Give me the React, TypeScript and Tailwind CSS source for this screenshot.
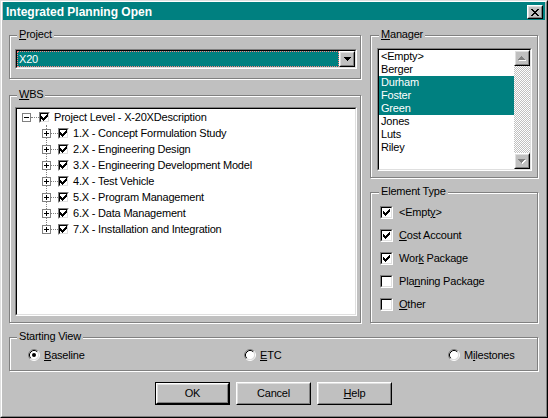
import React from "react";

const wbsItems = [
  "1.X - Concept Formulation Study",
  "2.X - Engineering Design",
  "3.X - Engineering Development Model",
  "4.X - Test Vehicle",
  "5.X - Program Management",
  "6.X - Data Management",
  "7.X - Installation and Integration",
];

const managers = [
  { name: "<Empty>", selected: false },
  { name: "Berger", selected: false },
  { name: "Durham", selected: true },
  { name: "Foster", selected: true },
  { name: "Green", selected: true },
  { name: "Jones", selected: false },
  { name: "Luts", selected: false },
  { name: "Riley", selected: false },
];

function Sunken({ className = "", children }: { className?: string; children?: React.ReactNode }) {
  return (
    <div className={`border border-t-[#808080] border-l-[#808080] border-b-white border-r-white ${className}`}>
      <div className="w-full h-full border border-t-black border-l-black border-b-[#dfdfdf] border-r-[#dfdfdf] bg-white">
        {children}
      </div>
    </div>
  );
}

function Raised({ className = "", children }: { className?: string; children?: React.ReactNode }) {
  return (
    <div className={`border border-t-white border-l-white border-b-black border-r-black shrink-0 ${className}`}>
      <div className="w-full h-full border border-t-[#dfdfdf] border-l-[#dfdfdf] border-b-[#808080] border-r-[#808080] bg-[#c0c0c0] flex items-center justify-center">
        {children}
      </div>
    </div>
  );
}

function Group({
  label,
  labelPos = "left-[7px]",
  className = "",
  children,
}: {
  label: React.ReactNode;
  labelPos?: string;
  className?: string;
  children?: React.ReactNode;
}) {
  return (
    <div className={`relative border border-[#808080] shadow-[1px_1px_0_#fff,inset_1px_1px_0_#fff] ${className}`}>
      <span className={`absolute top-[-8px] ${labelPos} px-[2px] bg-[#c0c0c0] leading-[13px] whitespace-nowrap`}>{label}</span>
      {children}
    </div>
  );
}

function CheckMark() {
  return (
    <svg width="7" height="7" viewBox="0 0 7 7" shapeRendering="crispEdges" className="block">
      <path
        d="M6 0h1v1H6zM5 1h2v1H5zM0 2h1v1H0zM4 2h3v1H4zM0 3h2v1H0zM3 3h3v1H3zM0 4h5v1H0zM1 5h3v1H1zM2 6h1v1H2z"
        fill="#000"
      />
    </svg>
  );
}

function CheckBox({ checked, small = false }: { checked: boolean; small?: boolean }) {
  return (
    <div
      className={`${small ? "w-[11px] h-[11px]" : "w-[13px] h-[13px]"} shrink-0 border border-t-[#808080] border-l-[#808080] border-b-white border-r-white`}
    >
      <div className="w-full h-full border border-t-black border-l-black border-b-[#dfdfdf] border-r-[#dfdfdf] bg-white flex items-center justify-center">
        {checked && <CheckMark />}
      </div>
    </div>
  );
}

function Radio({ checked }: { checked: boolean }) {
  return (
    <svg width="12" height="12" viewBox="0 0 12 12" className="shrink-0 block">
      <circle cx="6" cy="6" r="4.5" fill="#fff" />
      <path d="M2.11 9.89 A5.5 5.5 0 0 1 9.89 2.11" fill="none" stroke="#808080" strokeWidth="1" />
      <path d="M9.89 2.11 A5.5 5.5 0 0 1 2.11 9.89" fill="none" stroke="#fff" strokeWidth="1" />
      <path d="M2.82 9.18 A4.5 4.5 0 0 1 9.18 2.82" fill="none" stroke="#000" strokeWidth="1" />
      <path d="M9.18 2.82 A4.5 4.5 0 0 1 2.82 9.18" fill="none" stroke="#dfdfdf" strokeWidth="1" />
      {checked && <circle cx="6" cy="6" r="2" fill="#000" />}
    </svg>
  );
}

function Expander({ open }: { open: boolean }) {
  return (
    <div className="w-[9px] h-[9px] border border-[#808080] bg-white relative z-10 shrink-0">
      <svg width="7" height="7" viewBox="0 0 7 7" shapeRendering="crispEdges" className="block">
        <rect x="1" y="3" width="5" height="1" fill="#000" />
        {!open && <rect x="3" y="1" width="1" height="5" fill="#000" />}
      </svg>
    </div>
  );
}

function ArrowDown({ color = "#000" }: { color?: string }) {
  return (
    <svg width="7" height="4" viewBox="0 0 7 4" shapeRendering="crispEdges" className="block">
      <path d="M0 0h7v1H0zM1 1h5v1H1zM2 2h3v1H2zM3 3h1v1H3z" fill={color} />
    </svg>
  );
}

function DisabledArrow({ up }: { up: boolean }) {
  const d = up ? "M3 0h1v1H3zM2 1h3v1H2zM1 2h5v1H1zM0 3h7v1H0z" : "M0 0h7v1H0zM1 1h5v1H1zM2 2h3v1H2zM3 3h1v1H3z";
  return (
    <svg width="8" height="5" viewBox="0 0 8 5" shapeRendering="crispEdges" className="block">
      <path d={d} fill="#fff" transform="translate(1 1)" />
      <path d={d} fill="#808080" />
    </svg>
  );
}

export default function App() {
  return (
    <div className="w-[548px] h-[418px] bg-[#c0c0c0] border border-t-[#dfdfdf] border-l-[#dfdfdf] border-b-black border-r-black font-['Liberation_Sans',Arial,sans-serif] text-[11px] tracking-[-0.2px] text-black select-none">
      <div className="h-full border border-t-white border-l-white border-b-[#808080] border-r-[#808080] px-[1px] pb-[1px] flex flex-col">
        {/* title bar */}
        <div className="h-[18px] shrink-0 bg-[#008080] flex justify-between pl-[3px] pr-[2px]">
          <span className="pt-[3px] leading-[14px] text-[12px] font-bold tracking-normal text-white">Integrated Planning Open</span>
          <Raised className="w-[16px] h-[14px] mt-[3px]">
            <svg width="8" height="7" viewBox="0 0 8 7" shapeRendering="crispEdges" className="block">
              <path
                d="M0 0h2v1H0zM6 0h2v1H6zM1 1h2v1H1zM5 1h2v1H5zM2 2h4v1H2zM3 3h2v1H3zM2 4h4v1H2zM1 5h2v1H1zM5 5h2v1H5zM0 6h2v1H0zM6 6h2v1H6z"
                fill="#000"
              />
            </svg>
          </Raised>
        </div>

        <div className="flex flex-col pl-[6px] pr-[7px] pt-[15px]">
          <div className="flex gap-[9px]">
            {/* left column */}
            <div className="w-[352px] flex flex-col">
              <Group label={<><u>P</u>roject</>} className="h-[44px]">
                <Sunken className="ml-[5px] mt-[13px] w-[342px] h-[20px]">
                  <div className="flex h-full">
                    <div className="flex-1 bg-[#008080] border border-dotted border-[#ff7f7f] text-white pl-[1px] leading-[14px]">X20</div>
                    <Raised className="w-[16px] h-[16px]">
                      <ArrowDown />
                    </Raised>
                  </div>
                </Sunken>
              </Group>

              <Group label={<><u>W</u>BS</>} className="mt-[16px] h-[228px]">
                <Sunken className="ml-[5px] mt-[11px] w-[342px] h-[209px]">
                  <div className="flex items-center h-[16px] pl-[5px]">
                    <Expander open />
                    <div className="w-[8px] border-t border-dotted border-[#808080]" />
                    <CheckBox checked small />
                    <span className="ml-[4px] leading-[16px] whitespace-nowrap">Project Level - X-20XDescription</span>
                  </div>
                  <div className="relative">
                    <div className="absolute left-[29px] top-0 bottom-[8px] border-l border-dotted border-[#808080]" />
                    {wbsItems.map((item) => (
                      <div key={item} className="flex items-center h-[16px] pl-[25px]">
                        <Expander open={false} />
                        <div className="w-[7px] border-t border-dotted border-[#808080]" />
                        <CheckBox checked small />
                        <span className="ml-[4px] leading-[16px] whitespace-nowrap">{item}</span>
                      </div>
                    ))}
                  </div>
                </Sunken>
              </Group>
            </div>

            {/* right column */}
            <div className="w-[168px] flex flex-col">
              <Group label={<><u>M</u>anager</>} labelPos="left-[8px]" className="h-[143px]">
                <Sunken className="ml-[6px] mt-[12px] w-[155px] h-[123px]">
                  <div className="flex h-full">
                    <div className="flex-1">
                      {managers.map((m) => (
                        <div
                          key={m.name}
                          className={`h-[13px] leading-[13px] pl-[2px] ${m.selected ? "bg-[#008080] text-white" : ""}`}
                        >
                          {m.name}
                        </div>
                      ))}
                    </div>
                    <div className="w-[16px] h-full flex flex-col">
                      <Raised className="w-[16px] h-[16px]">
                        <DisabledArrow up />
                      </Raised>
                      <div className="flex-1 bg-[image:repeating-conic-gradient(#c0c0c0_0%_25%,#ffffff_0%_50%)] bg-size-[2px_2px]" />
                      <Raised className="w-[16px] h-[16px]">
                        <DisabledArrow up={false} />
                      </Raised>
                    </div>
                  </div>
                </Sunken>
              </Group>

              <Group label="Element Type" labelPos="left-[8px]" className="mt-[14px] h-[131px]">
                <div className="flex flex-col gap-[10px] pl-[9px] pt-[13px]">
                  <div className="flex items-center gap-[6px] h-[13px]">
                    <CheckBox checked />
                    <span>&lt;Empt<u>y</u>&gt;</span>
                  </div>
                  <div className="flex items-center gap-[6px] h-[13px]">
                    <CheckBox checked />
                    <span><u>C</u>ost Account</span>
                  </div>
                  <div className="flex items-center gap-[6px] h-[13px]">
                    <CheckBox checked />
                    <span>Wor<u>k</u> Package</span>
                  </div>
                  <div className="flex items-center gap-[6px] h-[13px]">
                    <CheckBox checked={false} />
                    <span>Pla<u>n</u>ning Package</span>
                  </div>
                  <div className="flex items-center gap-[6px] h-[13px]">
                    <CheckBox checked={false} />
                    <span><u>O</u>ther</span>
                  </div>
                </div>
              </Group>
            </div>
          </div>

          <Group label="Starting View" className="mt-[14px] h-[34px]">
            <div className="flex items-center pl-[18px] pt-[11px]">
              <div className="w-[216px] flex items-center gap-[4px] h-[12px]">
                <Radio checked />
                <span><u>B</u>aseline</span>
              </div>
              <div className="w-[204px] flex items-center gap-[4px] h-[12px]">
                <Radio checked={false} />
                <span><u>E</u>TC</span>
              </div>
              <div className="flex items-center gap-[4px] h-[12px]">
                <Radio checked={false} />
                <span>M<u>i</u>lestones</span>
              </div>
            </div>
          </Group>

          <div className="flex justify-center gap-[6px] mt-[11px]">
            <div className="w-[75px] h-[23px] border border-black">
              <Raised className="w-full h-full">OK</Raised>
            </div>
            <Raised className="w-[75px] h-[23px]">Cancel</Raised>
            <Raised className="w-[75px] h-[23px]">
              <span><u>H</u>elp</span>
            </Raised>
          </div>
        </div>
      </div>
    </div>
  );
}
